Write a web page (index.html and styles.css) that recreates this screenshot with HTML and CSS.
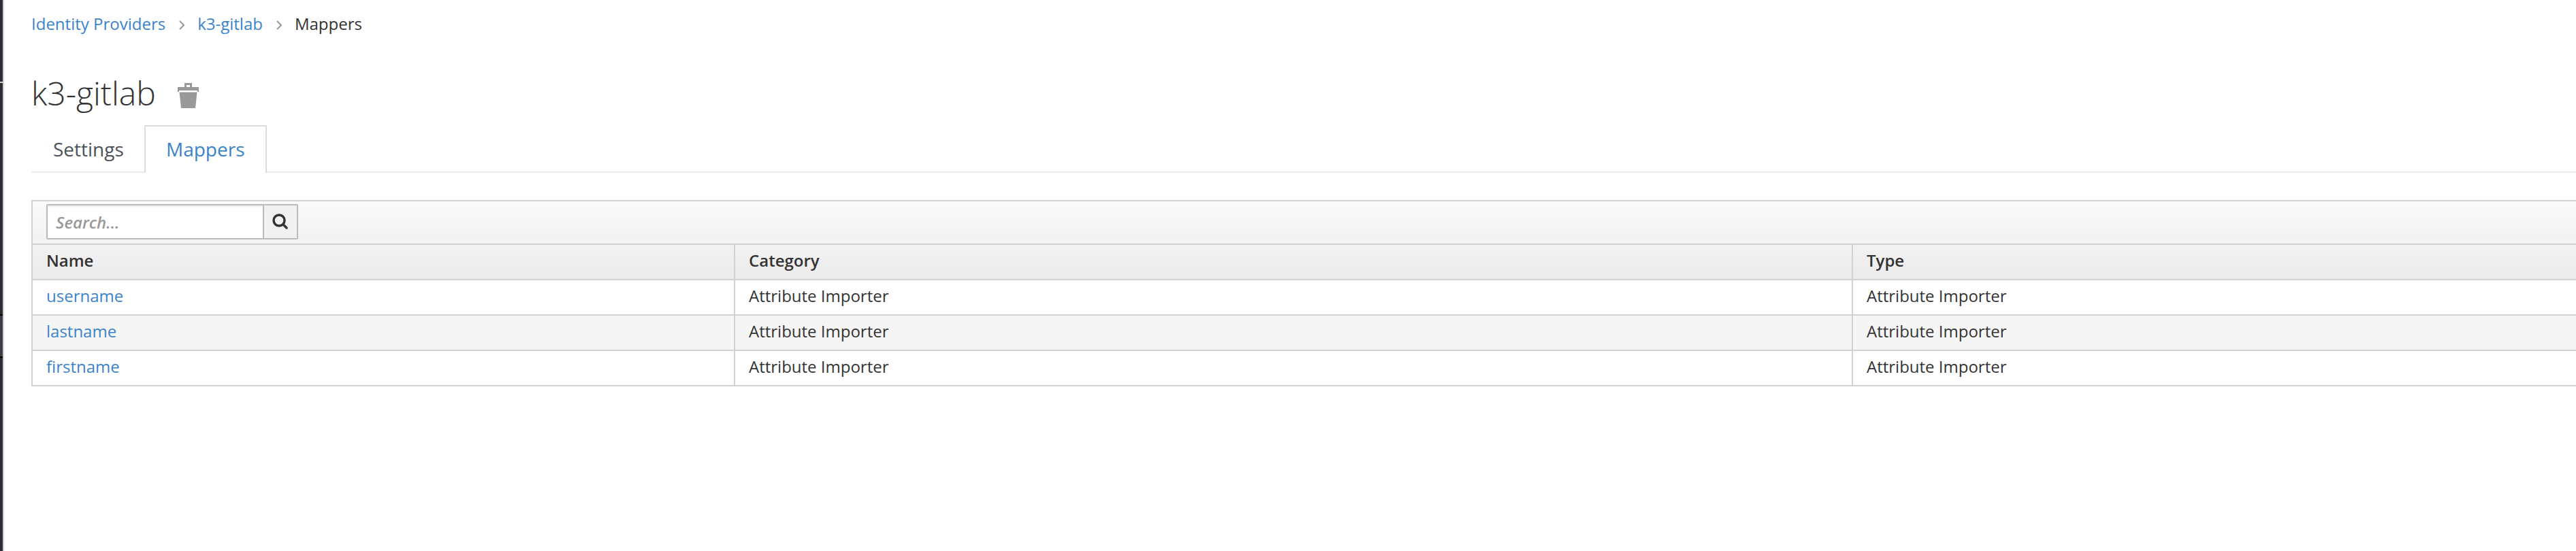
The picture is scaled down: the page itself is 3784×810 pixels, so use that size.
FILE: index.html
```html
<!DOCTYPE html>
<html lang="en">
<head>
<meta charset="utf-8">
<title>k3-gitlab</title>
<link rel="stylesheet" href="styles.css">
</head>
<body>
<div class="page">
  <aside class="rail"><div class="rail-top"></div><div class="rail-group"></div><div class="rail-active"></div></aside>
  <main class="content">
    <nav class="breadcrumb">
      <a>Identity Providers</a>
      <svg class="chevron" viewBox="0 0 8 14"><path d="M1 1l6 6-6 6"/></svg>
      <a>k3-gitlab</a>
      <svg class="chevron" viewBox="0 0 8 14"><path d="M1 1l6 6-6 6"/></svg>
      <span>Mappers</span>
    </nav>
    <h1 class="title"><span>k3-gitlab</span>
      <svg class="trash" viewBox="0 0 31 37"><path fill-rule="evenodd" d="M10 0h11v6h10v7h-2v-2H2v2H0V6h10zM13 3v3h5V3z"/><path d="M2.5 13.5h26L26 37H5z"/></svg>
    </h1>
    <div class="tabs"><a class="tab">Settings</a><a class="tab active">Mappers</a></div>
    <section class="table">
      <div class="toolbar">
        <div class="search"><span class="field">Search...</span><span class="button"><svg viewBox="0 0 24 24"><circle cx="10" cy="10" r="8"/><path d="M16 16l5 5"/></svg></span></div>
      </div>
      <div class="row head"><span>Name</span><span>Category</span><span>Type</span></div>
      <div class="row"><span><a>username</a></span><span>Attribute Importer</span><span>Attribute Importer</span></div>
      <div class="row alt"><span><a>lastname</a></span><span>Attribute Importer</span><span>Attribute Importer</span></div>
      <div class="row"><span><a>firstname</a></span><span>Attribute Importer</span><span>Attribute Importer</span></div>
    </section>
  </main>
</div>
</body>
</html>
```
FILE: styles.css
```css
* { box-sizing: border-box; }
body { margin: 0; background: #fff; color: #333; font: 24px/40px "Open Sans", sans-serif; overflow: hidden; }
a { color: #3b83ca; }
.page { display: flex; height: 810px; }
.rail { width: 6px; flex: none; background: #292e34; border-right: 2px solid #d1d1d1; }
.rail-top { height: 122px; border-bottom: 2px solid #d1d1d1; }
.rail-group { height: 340px; }
.rail-active { height: 64px; background: #393f44; border: solid #000; border-width: 2px 0; }
.content { flex: 1; min-width: 0; padding-left: 40px; }
.breadcrumb { display: flex; align-items: center; height: 70px; }
.chevron { width: 8px; height: 14px; margin: 4px 19px 0 20px; fill: none; stroke: #999; stroke-width: 2; }
.title { display: flex; align-items: center; height: 114px; margin: 0; padding-top: 20px; font-size: 48px; font-weight: 300; }
.trash { width: 31px; height: 37px; margin: 7px 0 0 32px; fill: #999; }
.tabs { display: flex; height: 70px; border-bottom: 2px solid #ececec; }
.tab { width: 166px; height: 70px; padding: 15px 32px 0; font-size: 28px; color: #4d5258; }
.tab.active { width: 180px; padding: 13px 30px 0; border: 2px solid #ddd; border-bottom: 0; background: #fff; color: #3b83ca; }
.table { margin-top: 40px; border-top: 2px solid #d1d1d1; border-left: 2px solid #d1d1d1; }
.toolbar { height: 64px; padding: 4px 20px; border-bottom: 2px solid #d1d1d1; background: linear-gradient(#fafafa, #f2f2f2); }
.search { display: flex; width: 370px; height: 52px; border: 2px solid #bbb; border-radius: 2px; }
.field { width: 316px; padding: 5px 12px; background: #fff; color: #999; font-weight: 600; font-style: italic; box-shadow: inset 0 2px 2px rgba(3,3,3,.075); }
.button { display: flex; flex: 1; align-items: center; justify-content: center; border-left: 2px solid #bbb; background: #f1f1f1; }
.button svg { width: 24px; height: 24px; fill: none; stroke: #333; stroke-width: 3.5; stroke-linecap: round; }
.row { display: grid; grid-template-columns: 1032px 1642px 1fr; height: 52px; border-bottom: 2px solid #d1d1d1; }
.row > span { padding: 3px 20px 0; border-right: 2px solid #d1d1d1; }
.row > span:last-child { border-right: 0; }
.head { font-weight: 600; background: linear-gradient(#f2f2f2, #ebebeb); }
.alt { background: #f5f5f5; }
```
